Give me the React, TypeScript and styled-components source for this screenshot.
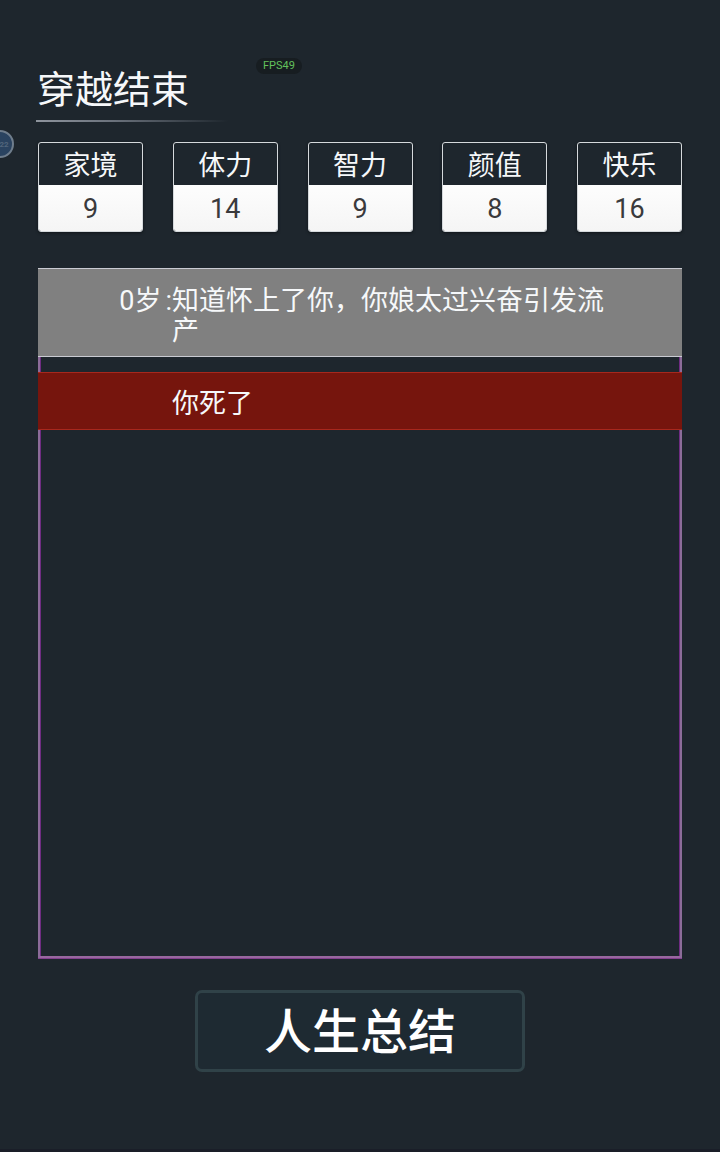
import React from 'react';
import styled, { createGlobalStyle } from 'styled-components';

const GlobalStyle = createGlobalStyle`
  *, *::before, *::after { box-sizing: border-box; }
  body {
    margin: 0;
    background: #1e262d;
    color: #f6f8fa;
    font-family: Roboto, 'Noto Sans CJK SC', sans-serif;
  }
`;

const Page = styled.main`
  position: relative;
  display: flex;
  flex-direction: column;
  min-height: 100vh;
  padding: 60px 38px 77px;
  overflow: hidden;
  border-bottom: 3px solid #1a1e28;
`;

const Title = styled.h1`
  align-self: flex-start;
  width: 192px;
  margin: 0 0 20px -2px;
  padding: 0 0 2px 1px;
  font-size: 38px;
  line-height: 60px;
  font-weight: 400;
  white-space: nowrap;
  background: linear-gradient(90deg, #8e949d, #6b727c 40%, #1e262d) bottom / 100% 2px no-repeat;
`;

const FpsBadge = styled.div`
  position: absolute;
  top: 58px;
  left: 256px;
  padding: 0 7px;
  border-radius: 8px;
  background: #171d21;
  color: #62c05c;
  font-size: 11px;
  line-height: 16px;
`;

const FloatingBall = styled.button`
  position: absolute;
  top: 130px;
  left: -14px;
  width: 28px;
  height: 28px;
  padding: 0 0 0 8px;
  border: 2px solid #6f7d8c;
  border-radius: 50%;
  background: #2a4360;
  color: #52667c;
  font-family: inherit;
  font-size: 8px;
  font-weight: 700;
`;

const Stats = styled.dl`
  display: flex;
  justify-content: space-between;
  margin: 0 0 36px;
`;

const StatCard = styled.div`
  width: 105px;
  border: 1px solid #d5d9dc;
  border-radius: 3px;
  overflow: hidden;
  text-align: center;
  font-size: 27px;
  box-shadow: 0 1px 3px #11161b;
`;

const StatName = styled.dt`
  padding-top: 4px;
  line-height: 38px;
`;

const StatValue = styled.dd`
  margin: 0;
  padding-top: 3px;
  line-height: 43px;
  color: #3a3a3c;
  background: linear-gradient(#fdfdfd, #f5f5f5);
`;

const Log = styled.ol`
  flex: 1;
  display: flex;
  flex-direction: column;
  gap: 15px;
  margin: 0 0 31px;
  padding: 0;
  list-style: none;
  box-shadow:
    inset 0 -1px #85408f,
    inset 2px 0 #8c6c99,
    inset -2px 0 #8c6c99,
    inset 0 -3px #98689f,
    inset 3px 0 #6f2c82,
    inset -3px 0 #6f2c82;
`;

const Entry = styled.li<{ $fatal?: boolean }>`
  display: grid;
  grid-template-columns: 134px 1fr;
  padding: ${p => (p.$fatal ? '16px 70px 10px 0' : '17px 70px 10px 0')};
  border: solid ${p => (p.$fatal ? '#a8281d' : '#c9cbd2')};
  border-width: 1px 0;
  background: ${p => (p.$fatal ? '#76150d' : '#808080')};
  font-size: 27px;
  line-height: 30px;
`;

const Age = styled.span`
  display: flex;
  justify-content: flex-end;
  gap: 4px;
`;

const SummaryButton = styled.button`
  align-self: center;
  width: 330px;
  height: 82px;
  padding: 4px 0 0;
  border: 3px solid #304248;
  border-radius: 7px;
  background: #1e2a32;
  color: #fff;
  font-family: inherit;
  font-size: 48px;
  font-weight: 500;
  line-height: 72px;
`;

const stats = [
  { name: '家境', value: 9 },
  { name: '体力', value: 14 },
  { name: '智力', value: 9 },
  { name: '颜值', value: 8 },
  { name: '快乐', value: 16 },
];

const events = [
  { age: '0岁', text: '知道怀上了你，你娘太过兴奋引发流产', fatal: false },
  { age: '', text: '你死了', fatal: true },
];

export default function App() {
  return (
    <>
      <GlobalStyle />
      <Page lang="zh-CN">
        <Title>穿越结束</Title>
        <Stats>
          {stats.map(s => (
            <StatCard key={s.name}>
              <StatName>{s.name}</StatName>
              <StatValue>{s.value}</StatValue>
            </StatCard>
          ))}
        </Stats>
        <Log>
          {events.map(e => (
            <Entry key={e.text} $fatal={e.fatal}>
              <Age>
                {e.age && (
                  <>
                    <span>{e.age}</span>
                    <span>:</span>
                  </>
                )}
              </Age>
              <span>{e.text}</span>
            </Entry>
          ))}
        </Log>
        <SummaryButton type="button">人生总结</SummaryButton>
        <FpsBadge>FPS49</FpsBadge>
        <FloatingBall type="button">22</FloatingBall>
      </Page>
    </>
  );
}
